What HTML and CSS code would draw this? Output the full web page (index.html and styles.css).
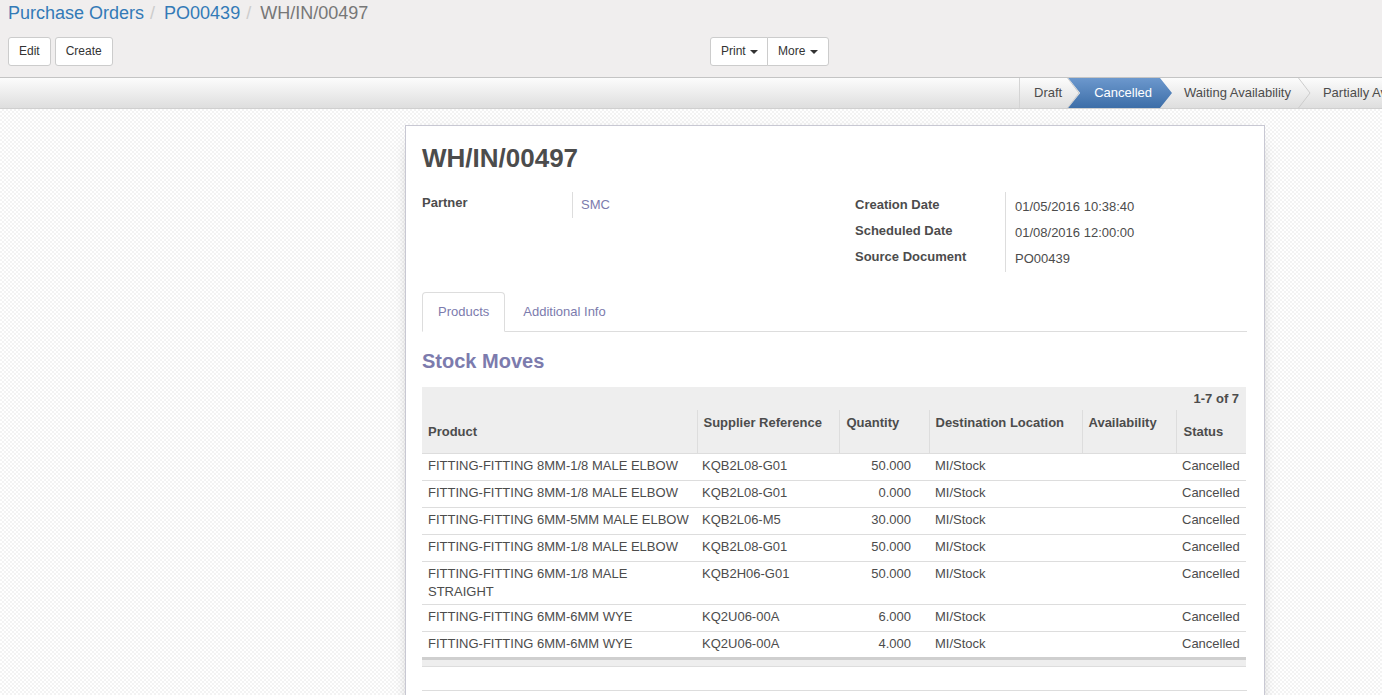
FILE: index.html
```html
<!DOCTYPE html>
<html>
<head>
<meta charset="utf-8">
<link rel="stylesheet" href="styles.css">
</head>
<body>
<div class="cp">
  <ol class="breadcrumb">
    <li><a class="crumb-link">Purchase Orders</a></li>
    <li class="sep">/</li>
    <li><a class="crumb-link">PO00439</a></li>
    <li class="sep">/</li>
    <li class="crumb-active">WH/IN/00497</li>
  </ol>
  <div class="cp-row">
    <div class="cp-left">
      <button class="btn">Edit</button>
      <button class="btn">Create</button>
    </div>
    <div class="cp-right">
      <div class="btn-group">
        <button class="btn gbtn">Print <span class="caret"></span></button>
        <button class="btn gbtn">More <span class="caret"></span></button>
      </div>
    </div>
  </div>
</div>
<div class="header-bar">
  <div class="statusbar">
    <span class="sb-item first">Draft</span>
    <span class="sb-item active">Cancelled</span>
    <span class="sb-item">Waiting Availability</span>
    <span class="sb-item">Partially Available</span>
  </div>
</div>
<div class="form-bg">
  <div class="sheet">
    <h1 class="title">WH/IN/00497</h1>
    <div class="groups">
      <div class="group group-left">
        <div class="g-row"><div class="g-label">Partner</div><div class="g-val"><a class="val-link">SMC</a></div></div>
      </div>
      <div class="group group-right">
        <div class="g-row"><div class="g-label">Creation Date</div><div class="g-val">01/05/2016 10:38:40</div></div>
        <div class="g-row"><div class="g-label">Scheduled Date</div><div class="g-val">01/08/2016 12:00:00</div></div>
        <div class="g-row"><div class="g-label">Source Document</div><div class="g-val">PO00439</div></div>
      </div>
    </div>
    <ul class="tabs">
      <li class="tab active">Products</li>
      <li class="tab">Additional Info</li>
    </ul>
    <h2 class="section">Stock Moves</h2>
    <table class="list">
      <colgroup>
        <col style="width:275px"><col style="width:142px"><col style="width:90px"><col style="width:153px"><col style="width:94px"><col style="width:70px">
      </colgroup>
      <thead>
        <tr class="pager-row"><th colspan="6" class="pager">1-7 of 7</th></tr>
        <tr class="col-row">
          <th class="mid">Product</th>
          <th>Supplier Reference</th>
          <th>Quantity</th>
          <th>Destination Location</th>
          <th>Availability</th>
          <th class="mid">Status</th>
        </tr>
      </thead>
      <tbody>
        <tr><td>FITTING-FITTING 8MM-1/8 MALE ELBOW</td><td>KQB2L08-G01</td><td class="num">50.000</td><td>MI/Stock</td><td></td><td class="right">Cancelled</td></tr>
        <tr><td>FITTING-FITTING 8MM-1/8 MALE ELBOW</td><td>KQB2L08-G01</td><td class="num">0.000</td><td>MI/Stock</td><td></td><td class="right">Cancelled</td></tr>
        <tr><td>FITTING-FITTING 6MM-5MM MALE ELBOW</td><td>KQB2L06-M5</td><td class="num">30.000</td><td>MI/Stock</td><td></td><td class="right">Cancelled</td></tr>
        <tr><td>FITTING-FITTING 8MM-1/8 MALE ELBOW</td><td>KQB2L08-G01</td><td class="num">50.000</td><td>MI/Stock</td><td></td><td class="right">Cancelled</td></tr>
        <tr><td>FITTING-FITTING 6MM-1/8 MALE STRAIGHT</td><td>KQB2H06-G01</td><td class="num">50.000</td><td>MI/Stock</td><td></td><td class="right">Cancelled</td></tr>
        <tr><td>FITTING-FITTING 6MM-6MM WYE</td><td>KQ2U06-00A</td><td class="num">6.000</td><td>MI/Stock</td><td></td><td class="right">Cancelled</td></tr>
        <tr><td>FITTING-FITTING 6MM-6MM WYE</td><td>KQ2U06-00A</td><td class="num">4.000</td><td>MI/Stock</td><td></td><td class="right">Cancelled</td></tr>
      </tbody>
      <tfoot>
        <tr><td colspan="6" class="foot"></td></tr>
      </tfoot>
    </table>
    <div class="after-table"></div>
  </div>
</div>
</body>
</html>
```
FILE: styles.css
```css
* { box-sizing: border-box; }
html, body { margin: 0; padding: 0; height: 100%; }
body {
  font-family: "Liberation Sans", Arial, sans-serif;
  font-size: 13px;
  color: #4c4c4c;
  overflow: hidden;
  background: #fff;
}
.cp {
  background: #f0eeee;
  height: 78px;
  border-bottom: 1px solid #c4c4c4;
  padding: 0 8px;
}
.breadcrumb {
  list-style: none;
  margin: 0;
  padding: 2px 0 0 0;
  display: flex;
  font-size: 18px;
  line-height: 22px;
  height: 30px;
}
.breadcrumb li { white-space: nowrap; }
.crumb-link { color: #337ab7; text-decoration: none; }
.sep { color: #ccc; padding: 0 9px 0 6px; }
.crumb-active { color: #777; }
.cp-row {
  display: grid;
  grid-template-columns: 1fr 1fr;
  margin-top: 7px;
}
.cp-left { display: flex; gap: 4px; }
.cp-right { padding-left: 19px; display: flex; }
.btn {
  font-family: "Liberation Sans", Arial, sans-serif;
  font-size: 12px;
  line-height: 17px;
  padding: 5px 10px;
  background: #fff;
  color: #333;
  border: 1px solid #ccc;
  border-radius: 3px;
  cursor: pointer;
}
.btn-group { display: flex; }
.gbtn { border-radius: 0; }
.gbtn:first-child { border-radius: 3px 0 0 3px; padding-right: 9px; }
.gbtn:last-child { border-radius: 0 3px 3px 0; margin-left: -1px; }
.caret {
  display: inline-block;
  width: 0; height: 0;
  border-top: 4px solid #333;
  border-left: 4px solid transparent;
  border-right: 4px solid transparent;
  vertical-align: middle;
  margin-left: 1px;
}
.header-bar {
  height: 31px;
  background: linear-gradient(#fcfcfc, #dedede);
  border-bottom: 1px solid #cfcfcf;
  display: flex;
}
.statusbar {
  margin-left: auto;
  width: 363px;
  display: flex;
  overflow: hidden;
  white-space: nowrap;
}
.sb-item {
  position: relative;
  flex: none;
  line-height: 30px;
  padding: 0 20px 0 24px;
  margin-left: -12px;
  color: #4c4c4c;
}
.sb-item::after {
  content: "";
  position: absolute;
  right: 0;
  top: 0;
  width: 13px;
  height: 30px;
  background: url("data:image/svg+xml,%3Csvg xmlns='http://www.w3.org/2000/svg' width='13' height='30'%3E%3Cpolyline points='0.5,0 12,15 0.5,30' fill='none' stroke='%23cccccc' stroke-width='1'/%3E%3C/svg%3E") no-repeat;
}
.sb-item.first {
  margin-left: 0;
  padding-left: 14px;
  padding-right: 18px;
  border-left: 1px solid #d4d4d4;
}
.sb-item.active {
  z-index: 1;
  color: #fff;
  padding-left: 26px;
  background: linear-gradient(#6c98cd, #3d6ea8);
  clip-path: polygon(0 0, calc(100% - 12px) 0, 100% 50%, calc(100% - 12px) 100%, 0 100%, 12px 50%);
}
.sb-item.active::after { display: none; }
.form-bg {
  height: calc(100% - 109px);
  background: repeating-conic-gradient(#f3f3f3 0 25%, #ffffff 0 50%) 0 0 / 4px 4px;
  padding: 16px 0 0 405px;
  overflow: hidden;
}
.sheet {
  width: 860px;
  min-height: 700px;
  background: #fff;
  border: 1px solid #c8c8d3;
  box-shadow: 0 5px 20px -15px #000;
  padding: 16px 17px 0 16px;
}
.title {
  margin: 0;
  font-size: 26px;
  line-height: 32px;
  font-weight: bold;
  color: #4c4c4c;
}
.groups {
  display: grid;
  grid-template-columns: 433px 1fr;
  margin-top: 18px;
}
.g-row {
  display: grid;
  grid-template-columns: 150px 1fr;
  height: 26px;
}
.g-label {
  font-weight: bold;
  padding-top: 2px;
  line-height: 18px;
}
.g-val {
  border-left: 1px solid #ddd;
  padding: 4px 0 0 8px;
  line-height: 18px;
}
.val-link { color: #7c7bad; text-decoration: none; }
.group-right .g-val { padding-left: 9px; padding-top: 6px; }
.group-right .g-label { padding-top: 4px; }
.group-right .g-row:last-child { height: 28px; }
.tabs {
  list-style: none;
  margin: 20px 0 0 0;
  padding: 0;
  display: flex;
  border-bottom: 1px solid #ddd;
  height: 40px;
}
.tab {
  padding: 10px 15px;
  line-height: 18px;
  color: #7c7bad;
  margin-right: 2px;
  border: 1px solid transparent;
  border-radius: 4px 4px 0 0;
}
.tab.active {
  background: #fff;
  border-color: #ddd #ddd transparent;
  height: 40px;
}
.section {
  margin: 17px 0 0 0;
  font-size: 20px;
  line-height: 24px;
  font-weight: bold;
  color: #7c7bad;
}
.list {
  margin-top: 14px;
  width: 824px;
  table-layout: fixed;
  border-collapse: collapse;
}
.list thead { background: #eee; }
.pager-row th {
  height: 23px;
  padding: 0 7px;
  text-align: right;
  font-weight: bold;
  line-height: 20px;
  vertical-align: middle;
}
.col-row th {
  height: 43px;
  padding: 4px 7px 0 6px;
  line-height: 18px;
  text-align: left;
  vertical-align: top;
  font-weight: bold;
  border-left: 1px solid #ddd;
  border-bottom: 1px solid #ddd;
}
.col-row th:first-child { border-left: none; }
.col-row th.mid { vertical-align: middle; padding-top: 2px; }
.col-row th:nth-child(3) { padding-left: 7px; }
.col-row th:last-child { padding-left: 7px; }
.list tbody td {
  height: 27px;
  padding: 3px 6px 3px 6px;
  line-height: 18px;
  vertical-align: top;
  border-bottom: 1px solid #ddd;
}
.list td.num { text-align: right; padding-right: 18px; }
.list td.right { text-align: right; padding-right: 7px; }
.list tbody td:nth-child(2) { padding-left: 5px; }
.foot {
  height: 8px;
  padding: 0;
  background: #eee;
  border-top: 3px solid #cfcfcf;
  border-bottom: 1px solid #ddd;
}
.after-table {
  margin-top: 23px;
  border-top: 1px solid #ddd;
  height: 40px;
}
```
